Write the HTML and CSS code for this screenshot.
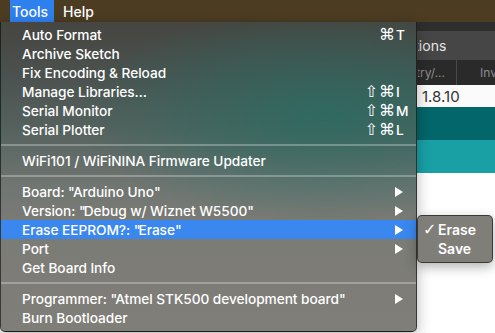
FILE: index.html
```html
<!DOCTYPE html>
<html>
<head>
<meta charset="utf-8">
<link rel="stylesheet" href="styles.css">
</head>
<body>
<div class="screen">
  <header class="menubar">
    <span class="mb-item active">Tools</span>
    <span class="mb-item">Help</span>
  </header>
  <div class="window">
    <div class="titlestrip"></div>
    <div class="options"><div class="clip"><span>Options</span></div></div>
    <div class="thead">
      <div class="th th-a"><div class="clip"><span>Registry/...</span></div></div>
      <div class="th th-b">Inv</div>
    </div>
    <div class="trow"><span>1.8.10</span></div>
    <div class="band dark"></div>
    <div class="band light"></div>
    <div class="blank"></div>
  </div>

  <div class="menu">
    <div class="item"><span class="label">Auto Format</span><span class="mods">⌘</span><span class="key">T</span></div>
    <div class="item"><span class="label">Archive Sketch</span></div>
    <div class="item"><span class="label">Fix Encoding &amp; Reload</span></div>
    <div class="item"><span class="label">Manage Libraries...</span><span class="mods">⇧ ⌘</span><span class="key">I</span></div>
    <div class="item"><span class="label">Serial Monitor</span><span class="mods">⇧ ⌘</span><span class="key">M</span></div>
    <div class="item"><span class="label">Serial Plotter</span><span class="mods">⇧ ⌘</span><span class="key">L</span></div>
    <div class="sep"></div>
    <div class="item"><span class="label">WiFi101 / WiFiNINA Firmware Updater</span></div>
    <div class="sep"></div>
    <div class="item"><span class="label">Board: <span class="q">"</span>Arduino Uno<span class="q">"</span></span><svg class="arrow" width="8" height="10" viewBox="0 0 8 10"><polygon points="0,0 8,5 0,10"/></svg></div>
    <div class="item"><span class="label">Version: <span class="q">"</span>Debug w/ Wiznet W5500<span class="q">"</span></span><svg class="arrow" width="8" height="10" viewBox="0 0 8 10"><polygon points="0,0 8,5 0,10"/></svg></div>
    <div class="item hl"><span class="label">Erase EEPROM?: <span class="q">"</span>Erase<span class="q">"</span></span><svg class="arrow" width="8" height="10" viewBox="0 0 8 10"><polygon points="0,0 8,5 0,10"/></svg></div>
    <div class="item"><span class="label">Port</span><svg class="arrow" width="8" height="10" viewBox="0 0 8 10"><polygon points="0,0 8,5 0,10"/></svg></div>
    <div class="item"><span class="label">Get Board Info</span></div>
    <div class="sep"></div>
    <div class="item"><span class="label">Programmer: <span class="q">"</span>Atmel STK500 development board<span class="q">"</span></span><svg class="arrow" width="8" height="10" viewBox="0 0 8 10"><polygon points="0,0 8,5 0,10"/></svg></div>
    <div class="item"><span class="label">Burn Bootloader</span></div>
  </div>

  <div class="submenu">
    <div class="sub-item"><span class="check">✓</span><span>Erase</span></div>
    <div class="sub-item"><span class="check"></span><span>Save</span></div>
  </div>
</div>
</body>
</html>
```

FILE: styles.css
```css
html, body {
  margin: 0;
  padding: 0;
}
body {
  width: 495px;
  height: 333px;
  overflow: hidden;
  font-family: "Inter", "DejaVu Sans", sans-serif;
  font-size: 14px;
}
.screen {
  position: relative;
  width: 495px;
  height: 333px;
  display: flex;
  flex-direction: column;
  background: #fff;
}
.menubar {
  height: 22px;
  flex: none;
  background: #4b3c22;
  display: flex;
  color: #fff;
  font-weight: 500;
}
.mb-item {
  display: flex;
  align-items: center;
  padding: 0 8px 0 9px;
}
.mb-item.active {
  margin-left: 10px;
  width: 44px;
  box-sizing: border-box;
  padding: 0 0 0 2px;
  background: #2f80ef;
}
.window {
  flex: 1;
  display: flex;
  flex-direction: column;
}
.titlestrip {
  height: 9px;
  background: #2e2e2e;
}
.clip {
  overflow: hidden;
  white-space: nowrap;
}
.options {
  height: 29px;
  background: #464646;
  color: #e6e6e6;
  display: flex;
  align-items: center;
  padding-left: 418px;
  font-size: 14px;
}
.options .clip span {
  display: inline-block;
  margin-left: -23px;
}
.thead {
  height: 25px;
  background: #2a2a2a;
  display: flex;
  color: #8c8c8c;
  font-size: 12px;
  font-weight: 400;
  overflow: hidden;
}
.th {
  display: flex;
  align-items: center;
  flex: none;
}
.th-a {
  width: 457px;
  padding-left: 418px;
  padding-right: 11px;
  box-sizing: border-box;
  border-right: 1px solid #4a4a4a;
}
.th-a .clip {
  flex: 1;
  direction: rtl;
}
.th-a .clip span {
  direction: ltr;
  unicode-bidi: isolate;
}
.th-b {
  padding-left: 23px;
  white-space: nowrap;
}
.trow {
  height: 22px;
  background: #fbfbfb;
  color: #333;
  display: flex;
  align-items: center;
  padding-left: 422px;
  font-size: 15px;
}
.band {
  height: 33px;
}
.band.dark {
  background: #03666a;
}
.band.light {
  background: #18a0a4;
}
.blank {
  flex: 1;
  background: #fff;
}

/* dropdown menu */
.menu {
  position: absolute;
  top: 22px;
  left: 0;
  width: 417px;
  height: 310px;
  box-sizing: border-box;
  padding: 3px 0 5px;
  border: 1px solid rgba(0, 0, 0, 0.55);
  border-top: none;
  border-radius: 0 0 5px 5px;
  color: #fff;
  font-weight: 500;
  font-size: 13.7px;
  letter-spacing: -0.05px;
  background:
    radial-gradient(ellipse 60% 35% at 78% 30%, rgba(38, 108, 98, 0.8), rgba(38, 108, 98, 0) 100%),
    linear-gradient(to bottom, #464541 0%, #4b524f 18%, #56625e 35%, #6f7571 52%, #7b7b76 66%, #7f7e79 100%);
  box-shadow: 0 4px 14px rgba(0, 0, 0, 0.3);
}
.item {
  height: 19px;
  display: flex;
  align-items: center;
  padding: 0 10px 0 21px;
}
.item.hl {
  background: #3a87f0;
}
.label {
  flex: 1;
  white-space: nowrap;
}
.q {
  letter-spacing: -2px;
}
.mods {
  font-family: "DejaVu Sans", sans-serif;
  font-size: 16px;
  letter-spacing: -2px;
  margin-right: 3px;
  white-space: nowrap;
}
.key {
  width: 10px;
}
.arrow {
  fill: #fff;
  margin-right: 3px;
}
.sep {
  height: 12px;
  display: flex;
  align-items: center;
}
.sep::after {
  content: "";
  flex: 1;
  height: 2px;
  background: rgba(255, 255, 255, 0.28);
}

/* submenu */
.submenu {
  position: absolute;
  top: 215px;
  left: 417px;
  width: 76px;
  box-sizing: border-box;
  padding: 4px 0 4px;
  background: #7f7e79;
  border: 1px solid rgba(0, 0, 0, 0.55);
  border-radius: 5px;
  color: #fff;
  font-weight: 600;
  box-shadow: 0 4px 12px rgba(0, 0, 0, 0.3);
}
.sub-item {
  height: 19px;
  display: flex;
  align-items: center;
  padding-left: 5px;
}
.check {
  width: 15px;
  font-family: "DejaVu Sans", sans-serif;
  font-size: 16px;
  font-weight: bold;
}
```
